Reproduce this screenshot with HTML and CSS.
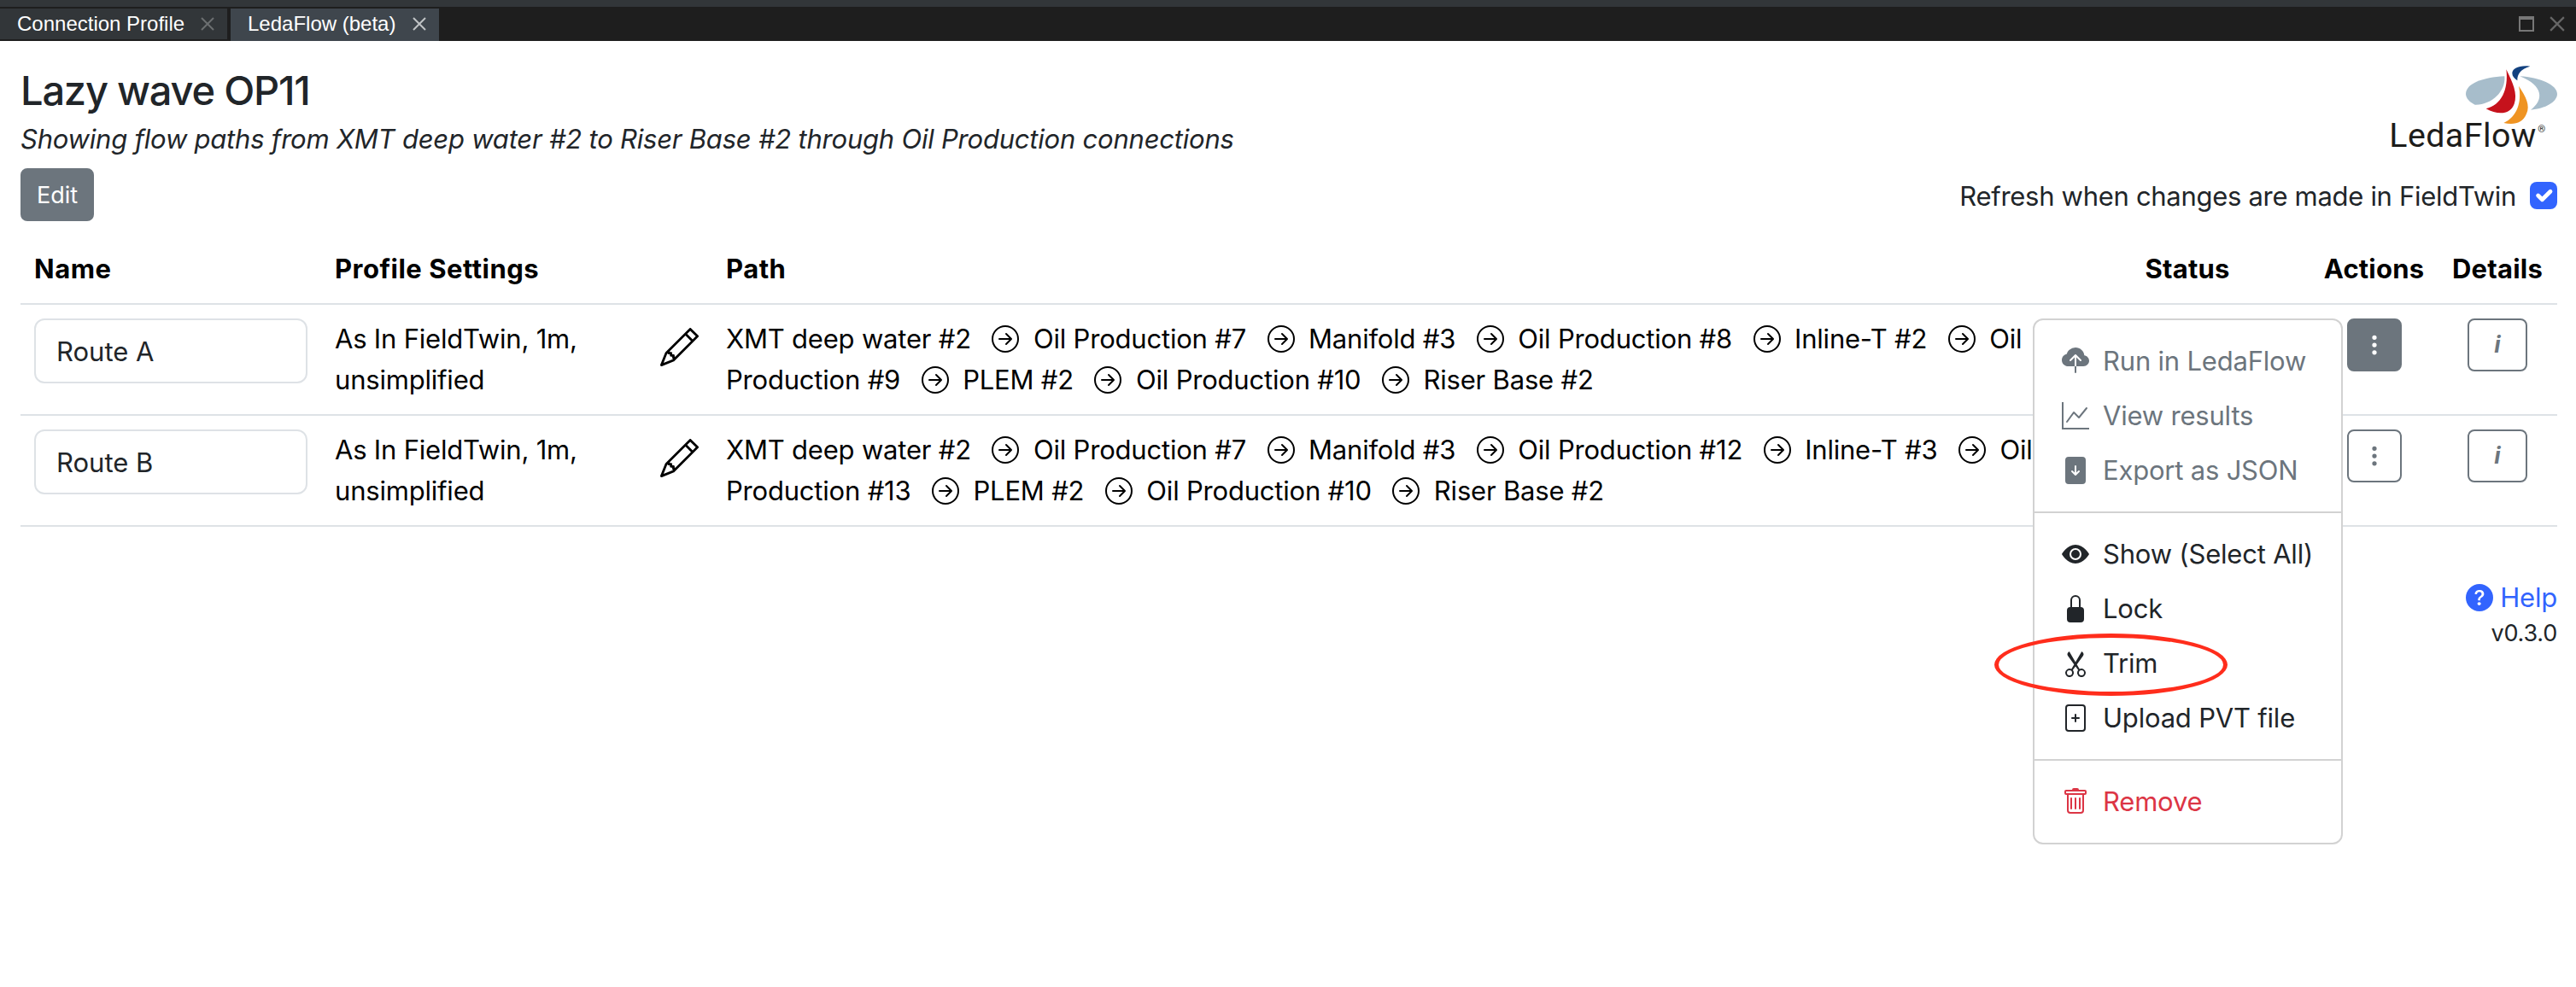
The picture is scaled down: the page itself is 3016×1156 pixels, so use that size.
FILE: index.html
```html
<!DOCTYPE html>
<html lang="en">
<head>
    <meta charset="UTF-8">
    <meta name="viewport" content="width=device-width, initial-scale=1.0">
    <title>LedaFlow (beta)</title>

    <link rel="stylesheet" href="styles.css">
</head>
<body>
    <svg class="symbols" aria-hidden="true">
        <symbol id="arrow-right-circle" viewBox="0 0 16 16"><path d="M1 8a7 7 0 1 0 14 0A7 7 0 0 0 1 8m15 0A8 8 0 1 1 0 8a8 8 0 0 1 16 0M4.5 7.5a.5.5 0 0 0 0 1h5.793l-2.147 2.146a.5.5 0 0 0 .708.708l3-3a.5.5 0 0 0 0-.708l-3-3a.5.5 0 1 0-.708.708L10.293 7.5z"/></symbol>
        <symbol id="pencil" viewBox="0 0 16 16"><path d="M12.146.146a.5.5 0 0 1 .708 0l3 3a.5.5 0 0 1 0 .708l-10 10a.5.5 0 0 1-.168.11l-5 2a.5.5 0 0 1-.65-.65l2-5a.5.5 0 0 1 .11-.168zM11.207 2.5 13.5 4.793 14.793 3.5 12.5 1.207zm1.586 3L10.5 3.207 4 9.707V10h.5a.5.5 0 0 1 .5.5v.5h.5a.5.5 0 0 1 .5.5v.5h.293zm-9.761 5.175-.106.106-1.528 3.821 3.821-1.528.106-.106A.5.5 0 0 1 5 12.5V12h-.5a.5.5 0 0 1-.5-.5V11h-.5a.5.5 0 0 1-.468-.325"/></symbol>
        <symbol id="three-dots" viewBox="0 0 16 16"><path d="M9.5 13a1.5 1.5 0 1 1-3 0 1.5 1.5 0 0 1 3 0m0-5a1.5 1.5 0 1 1-3 0 1.5 1.5 0 0 1 3 0m0-5a1.5 1.5 0 1 1-3 0 1.5 1.5 0 0 1 3 0"/></symbol>
        <symbol id="cross" viewBox="0 0 16 16"><path d="M1 1l14 14M15 1L1 15" fill="none" stroke="currentColor" stroke-width="2"/></symbol>
    </svg>

    <div class="tabbar">
        <div class="tab"><span>Connection Profile</span><svg class="tab-close"><use href="#cross"/></svg></div>
        <div class="tab active"><span>LedaFlow (beta)</span><svg class="tab-close"><use href="#cross"/></svg></div>
        <div class="window-buttons">
            <span class="maximize"></span>
            <svg class="close"><use href="#cross"/></svg>
        </div>
    </div>

    <main>
        <header>
            <div>
                <h1>Lazy wave OP11</h1>
                <p class="subtitle">Showing flow paths from XMT deep water #2 to Riser Base #2 through Oil Production connections</p>
            </div>
            <svg class="logo" viewBox="0 0 600 300" role="img" aria-label="LedaFlow">
                <path fill="#a7bdcb" d="M397 58C320 62 261 84 261 120C261 136 276 150 293 158C350 160 402 112 397 58Z"/>
                <path fill="#a7bdcb" d="M451 58C520 62 582 88 582 120C582 148 540 172 489 176C535 142 535 92 451 58Z"/>
                <path fill="#c6121c" d="M403 34C426 80 444 120 431 155C418 192 375 196 332 172C385 160 412 105 403 34Z"/>
                <path fill="#ef9423" d="M447 92C472 130 488 160 474 190C460 224 430 230 394 222C440 200 459 150 447 92Z"/>
                <path fill="#12417f" d="M487 23C450 18 423 30 424 48C424 58 432 66 442 73C441 50 455 32 487 23Z"/>
                <text class="logo-text" x="-8" y="307" textLength="516">LedaFlow</text>
                <text class="logo-reg" x="514" y="255">®</text>
            </svg>
        </header>

        <div class="toolbar">
            <button type="button" class="btn btn-edit">Edit</button>
            <label class="refresh">Refresh when changes are made in FieldTwin
                <svg class="checkbox" viewBox="0 0 20 20"><path d="M6 10l3 3 6-6" fill="none" stroke="#fff" stroke-linecap="round" stroke-linejoin="round" stroke-width="3"/></svg>
            </label>
        </div>

        <table>
            <colgroup>
                <col class="col-name">
                <col class="col-profile">
                <col class="col-path">
                <col class="col-status">
                <col class="col-actions">
                <col class="col-details">
            </colgroup>
            <thead>
                <tr>
                    <th>Name</th>
                    <th>Profile Settings</th>
                    <th>Path</th>
                    <th class="center">Status</th>
                    <th class="center">Actions</th>
                    <th class="center">Details</th>
                </tr>
            </thead>
            <tbody>
                <tr>
                    <td><input type="text" value="Route A"></td>
                    <td>
                        <div class="profile">
                            <span>As In FieldTwin, 1m, unsimplified</span>
                            <svg class="edit-icon"><use href="#pencil"/></svg>
                        </div>
                    </td>
                    <td class="path">
                        XMT deep water #2
                        <svg><use href="#arrow-right-circle"/></svg> Oil Production #7
                        <svg><use href="#arrow-right-circle"/></svg> Manifold #3
                        <svg><use href="#arrow-right-circle"/></svg> Oil Production #8
                        <svg><use href="#arrow-right-circle"/></svg> Inline-T #2
                        <svg><use href="#arrow-right-circle"/></svg> Oil Production #9
                        <svg><use href="#arrow-right-circle"/></svg> PLEM #2
                        <svg><use href="#arrow-right-circle"/></svg> Oil Production #10
                        <svg><use href="#arrow-right-circle"/></svg> Riser Base #2
                    </td>
                    <td></td>
                    <td class="center actions">
                        <button type="button" class="btn btn-menu active"><svg><use href="#three-dots"/></svg></button>
                        <div class="menu">
                            <div class="item disabled">
                                <svg viewBox="0 0 16 16"><path d="M8 0a5.53 5.53 0 0 0-3.594 1.342c-.766.66-1.321 1.52-1.464 2.383C1.266 4.095 0 5.555 0 7.318 0 9.366 1.708 11 3.781 11H7.5V5.707L5.354 7.854a.5.5 0 1 1-.708-.708l3-3a.5.5 0 0 1 .708 0l3 3a.5.5 0 0 1-.708.708L8.5 5.707V11h4.188C14.502 11 16 9.57 16 7.773c0-1.636-1.242-2.969-2.834-3.194C12.923 1.999 10.69 0 8 0m-.5 14.5V11h1v3.5a.5.5 0 0 1-1 0"/></svg>
                                <span>Run in LedaFlow</span>
                            </div>
                            <div class="item disabled">
                                <svg viewBox="0 0 16 16"><path d="M0 0h1v15h15v1H0zm14.817 3.113a.5.5 0 0 1 .07.704l-4.5 5.5a.5.5 0 0 1-.74.037L7.06 6.767l-3.656 5.027a.5.5 0 0 1-.808-.588l4-5.5a.5.5 0 0 1 .758-.06l2.609 2.61 4.15-5.073a.5.5 0 0 1 .704-.07"/></svg>
                                <span>View results</span>
                            </div>
                            <div class="item disabled">
                                <svg viewBox="0 0 16 16"><path d="M12 0H4a2 2 0 0 0-2 2v12a2 2 0 0 0 2 2h8a2 2 0 0 0 2-2V2a2 2 0 0 0-2-2M8 5a.5.5 0 0 1 .5.5v3.793l1.146-1.147a.5.5 0 0 1 .708.708l-2 2a.5.5 0 0 1-.708 0l-2-2a.5.5 0 1 1 .708-.708L7.5 9.293V5.5A.5.5 0 0 1 8 5"/></svg>
                                <span>Export as JSON</span>
                            </div>
                            <hr>
                            <div class="item">
                                <svg viewBox="0 0 16 16"><path d="M10.5 8a2.5 2.5 0 1 1-5 0 2.5 2.5 0 0 1 5 0"/><path d="M0 8s3-5.5 8-5.5S16 8 16 8s-3 5.5-8 5.5S0 8 0 8m8 3.5a3.5 3.5 0 1 0 0-7 3.5 3.5 0 0 0 0 7"/></svg>
                                <span>Show (Select All)</span>
                            </div>
                            <div class="item">
                                <svg viewBox="0 0 16 16"><path d="M8 1a2 2 0 0 1 2 2v4H6V3a2 2 0 0 1 2-2m3 6V3a3 3 0 0 0-6 0v4a2 2 0 0 0-2 2v5a2 2 0 0 0 2 2h6a2 2 0 0 0 2-2V9a2 2 0 0 0-2-2"/></svg>
                                <span>Lock</span>
                            </div>
                            <div class="item marked">
                                <svg viewBox="0 0 16 16"><path d="M3.5 3.5c-.614-.884-.074-1.962.858-2.5L8 7.226 11.642 1c.932.538 1.472 1.616.858 2.5L8.81 8.61l1.556 2.661a2.5 2.5 0 1 1-.794.637L8 9.73l-1.572 2.177a2.5 2.5 0 1 1-.794-.637L7.19 8.61zm2.5 10a1.5 1.5 0 1 0-3 0 1.5 1.5 0 0 0 3 0m7 0a1.5 1.5 0 1 0-3 0 1.5 1.5 0 0 0 3 0"/></svg>
                                <span>Trim</span>
                            </div>
                            <div class="item">
                                <svg viewBox="0 0 16 16"><path d="M8.5 6a.5.5 0 0 0-1 0v1.5H6a.5.5 0 0 0 0 1h1.5V10a.5.5 0 0 0 1 0V8.5H10a.5.5 0 0 0 0-1H8.5z"/><path d="M2 2a2 2 0 0 1 2-2h8a2 2 0 0 1 2 2v12a2 2 0 0 1-2 2H4a2 2 0 0 1-2-2zm10-1H4a1 1 0 0 0-1 1v12a1 1 0 0 0 1 1h8a1 1 0 0 0 1-1V2a1 1 0 0 0-1-1"/></svg>
                                <span>Upload PVT file</span>
                            </div>
                            <hr>
                            <div class="item danger">
                                <svg viewBox="0 0 16 16"><path d="M5.5 5.5A.5.5 0 0 1 6 6v6a.5.5 0 0 1-1 0V6a.5.5 0 0 1 .5-.5m2.5 0a.5.5 0 0 1 .5.5v6a.5.5 0 0 1-1 0V6a.5.5 0 0 1 .5-.5m3 .5a.5.5 0 0 0-1 0v6a.5.5 0 0 0 1 0z"/><path d="M14.5 3a1 1 0 0 1-1 1H13v9a2 2 0 0 1-2 2H5a2 2 0 0 1-2-2V4h-.5a1 1 0 0 1-1-1V2a1 1 0 0 1 1-1H6a1 1 0 0 1 1-1h2a1 1 0 0 1 1 1h3.5a1 1 0 0 1 1 1zM4.118 4 4 4.059V13a1 1 0 0 0 1 1h6a1 1 0 0 0 1-1V4.059L11.882 4zM2.5 3h11V2h-11z"/></svg>
                                <span>Remove</span>
                            </div>
                        </div>
                    </td>
                    <td class="center"><button type="button" class="btn btn-info">i</button></td>
                </tr>
                <tr>
                    <td><input type="text" value="Route B"></td>
                    <td>
                        <div class="profile">
                            <span>As In FieldTwin, 1m, unsimplified</span>
                            <svg class="edit-icon"><use href="#pencil"/></svg>
                        </div>
                    </td>
                    <td class="path">
                        XMT deep water #2
                        <svg><use href="#arrow-right-circle"/></svg> Oil Production #7
                        <svg><use href="#arrow-right-circle"/></svg> Manifold #3
                        <svg><use href="#arrow-right-circle"/></svg> Oil Production #12
                        <svg><use href="#arrow-right-circle"/></svg> Inline-T #3
                        <svg><use href="#arrow-right-circle"/></svg> Oil Production #13
                        <svg><use href="#arrow-right-circle"/></svg> PLEM #2
                        <svg><use href="#arrow-right-circle"/></svg> Oil Production #10
                        <svg><use href="#arrow-right-circle"/></svg> Riser Base #2
                    </td>
                    <td></td>
                    <td class="center"><button type="button" class="btn btn-menu"><svg><use href="#three-dots"/></svg></button></td>
                    <td class="center"><button type="button" class="btn btn-info">i</button></td>
                </tr>
            </tbody>
        </table>

        <footer>
            <a class="help" href="#"><svg viewBox="0 0 16 16"><path d="M16 8A8 8 0 1 1 0 8a8 8 0 0 1 16 0M5.496 6.033h.825c.138 0 .248-.113.266-.25.09-.656.54-1.134 1.342-1.134.686 0 1.314.343 1.314 1.168 0 .635-.374.927-.965 1.371-.673.489-1.206 1.06-1.168 1.987l.003.217a.25.25 0 0 0 .25.246h.811a.25.25 0 0 0 .25-.25v-.105c0-.718.273-.927 1.01-1.486.609-.463 1.244-.977 1.244-2.056 0-1.511-1.276-2.241-2.673-2.241-1.267 0-2.655.59-2.75 2.286a.237.237 0 0 0 .241.247m2.325 6.443c.61 0 1.029-.394 1.029-.927 0-.552-.42-.94-1.029-.94-.584 0-1.009.388-1.009.94 0 .533.425.927 1.01.927z"/></svg>Help</a>
            <span class="version">v0.3.0</span>
        </footer>
    </main>
</body>
</html>
```
FILE: styles.css
```css
* {
    box-sizing: border-box;
}

body {
    min-height: 1156px;
    margin: 0;
    background-color: #fff;
    color: #212529;
    font-family: 'Inter', sans-serif;
    font-size: 31px;
    letter-spacing: -0.2px;
    line-height: 48px;
}

svg {
    fill: currentColor;
}

.symbols {
    display: none;
}

.tabbar {
    display: flex;
    height: 48px;
    padding-top: 2px;
    border-top: 8px solid #323639;
    background-color: #1e1e1e;
    font-family: 'Liberation Sans', sans-serif;
    font-size: 24px;
    letter-spacing: 0;
    line-height: 36px;
    color: #fff;
}

.tab {
    display: flex;
    align-items: center;
    justify-content: space-between;
    width: 266px;
    height: 36px;
    margin-right: 4px;
    padding: 0 15px 0 20px;
    background-color: #323639;
}

.tab.active {
    width: 244px;
    height: 38px;
    padding-bottom: 2px;
    background-color: #3f464d;
}

.tab-close {
    width: 16px;
    height: 16px;
    color: #6c6f71;
}

.tab.active .tab-close {
    color: #c0c3c5;
}

.window-buttons {
    display: flex;
    align-items: center;
    gap: 18px;
    height: 36px;
    margin-left: auto;
    padding-right: 13px;
}

.maximize {
    width: 18px;
    height: 18px;
    border: 2px solid #777;
    border-top-width: 4px;
}

.close {
    width: 18px;
    height: 18px;
    color: #666;
}

main {
    padding: 29px 22px 0 24px;
}

header {
    display: flex;
    justify-content: space-between;
    height: 120px;
}

h1 {
    margin: 0 0 4px;
    font-size: 47px;
    font-weight: 500;
    letter-spacing: -1.2px;
    line-height: 58px;
}

.subtitle {
    margin: 0;
    font-style: italic;
    letter-spacing: -0.22px;
}

.logo {
    width: 200px;
    height: 100px;
    margin: -7px -6px 0 0;
    overflow: visible;
}

.logo-text {
    font-family: 'Roboto', sans-serif;
    font-size: 118px;
    letter-spacing: 0;
    fill: #1d1d1b;
}

.logo-reg {
    font-family: 'Roboto', sans-serif;
    font-size: 34px;
    fill: #1d1d1b;
}

.toolbar {
    display: flex;
    align-items: flex-start;
    justify-content: space-between;
    height: 78px;
}

.btn {
    height: 62px;
    padding: 0;
    border: 2px solid #6c757d;
    border-radius: 8px;
    background-color: #fff;
    color: #6c757d;
    font-family: inherit;
    font-size: 27px;
    line-height: 42px;
}

.btn-edit {
    width: 86px;
    padding-top: 1px;
    background-color: #6c757d;
    color: #fff;
}

.refresh {
    display: flex;
    align-items: center;
    gap: 16px;
    padding-top: 9px;
    letter-spacing: -0.3px;
}

.checkbox {
    width: 32px;
    height: 32px;
    margin-top: -2px;
    border-radius: 8px;
    background-color: #3264fe;
}

table {
    width: 100%;
    border-collapse: separate;
    border-spacing: 0;
    table-layout: fixed;
    color: #000;
}

.col-name { width: 352px; }
.col-profile { width: 458px; }
.col-path { width: 1583px; }
.col-status { width: 288px; }
.col-actions { width: 149px; }
.col-details { width: 140px; }

th, td {
    padding: 16px;
    border-bottom: 2px solid #dee2e6;
    text-align: left;
    vertical-align: top;
}

th {
    font-weight: 700;
    letter-spacing: 0.5px;
    white-space: nowrap;
}

th.center {
    letter-spacing: 0.2px;
}

td {
    height: 130px;
}

.center {
    padding-left: 0;
    padding-right: 0;
    text-align: center;
}

input {
    display: block;
    width: 320px;
    height: 76px;
    padding: 0 24px;
    border: 2px solid #dee2e6;
    border-radius: 12px;
    background-color: #fff;
    color: #212529;
    font: inherit;
}

.profile {
    display: flex;
    justify-content: space-between;
}

.edit-icon {
    flex: none;
    width: 45px;
    height: 45px;
    margin-top: 11px;
}

.path svg {
    width: 32px;
    height: 32px;
    margin: 0 8px 0 16px;
    vertical-align: -5px;
}

.btn-menu {
    width: 64px;
}

.btn-menu svg {
    display: block;
    width: 28px;
    height: 28px;
    margin: 0 auto;
}

.btn-menu.active {
    background-color: #6c757d;
    color: #fff;
}

.btn-info {
    width: 70px;
    font-style: italic;
    font-weight: 700;
}

.actions {
    position: relative;
}

.menu {
    position: absolute;
    top: 16px;
    right: 111px;
    width: 363px;
    padding: 16px 0;
    border: 2px solid #d2d2d2;
    border-radius: 12px;
    background-color: #fff;
    color: #212529;
    text-align: left;
}

.menu hr {
    margin: 16px 0;
    border: 0;
    border-top: 2px solid #d2d2d2;
}

.item {
    display: flex;
    align-items: center;
    gap: 16px;
    height: 64px;
    padding: 0 32px;
    white-space: nowrap;
}

.item svg {
    flex: none;
    width: 32px;
    height: 32px;
}

.item.disabled {
    color: #6c757d;
}

.item.danger {
    color: #dc3545;
}

.marked {
    position: relative;
}

.marked::after {
    content: '';
    position: absolute;
    top: -3px;
    left: -47px;
    width: 263px;
    height: 63px;
    border: 5px solid #ff2d1c;
    border-radius: 50%;
}

footer {
    display: flex;
    flex-direction: column;
    align-items: flex-end;
    margin-top: 59px;
}

.help {
    display: flex;
    align-items: center;
    gap: 8px;
    color: #3264fe;
    text-decoration: none;
}

.help svg {
    width: 32px;
    height: 32px;
}

.version {
    font-size: 27px;
    line-height: 36px;
}
```
